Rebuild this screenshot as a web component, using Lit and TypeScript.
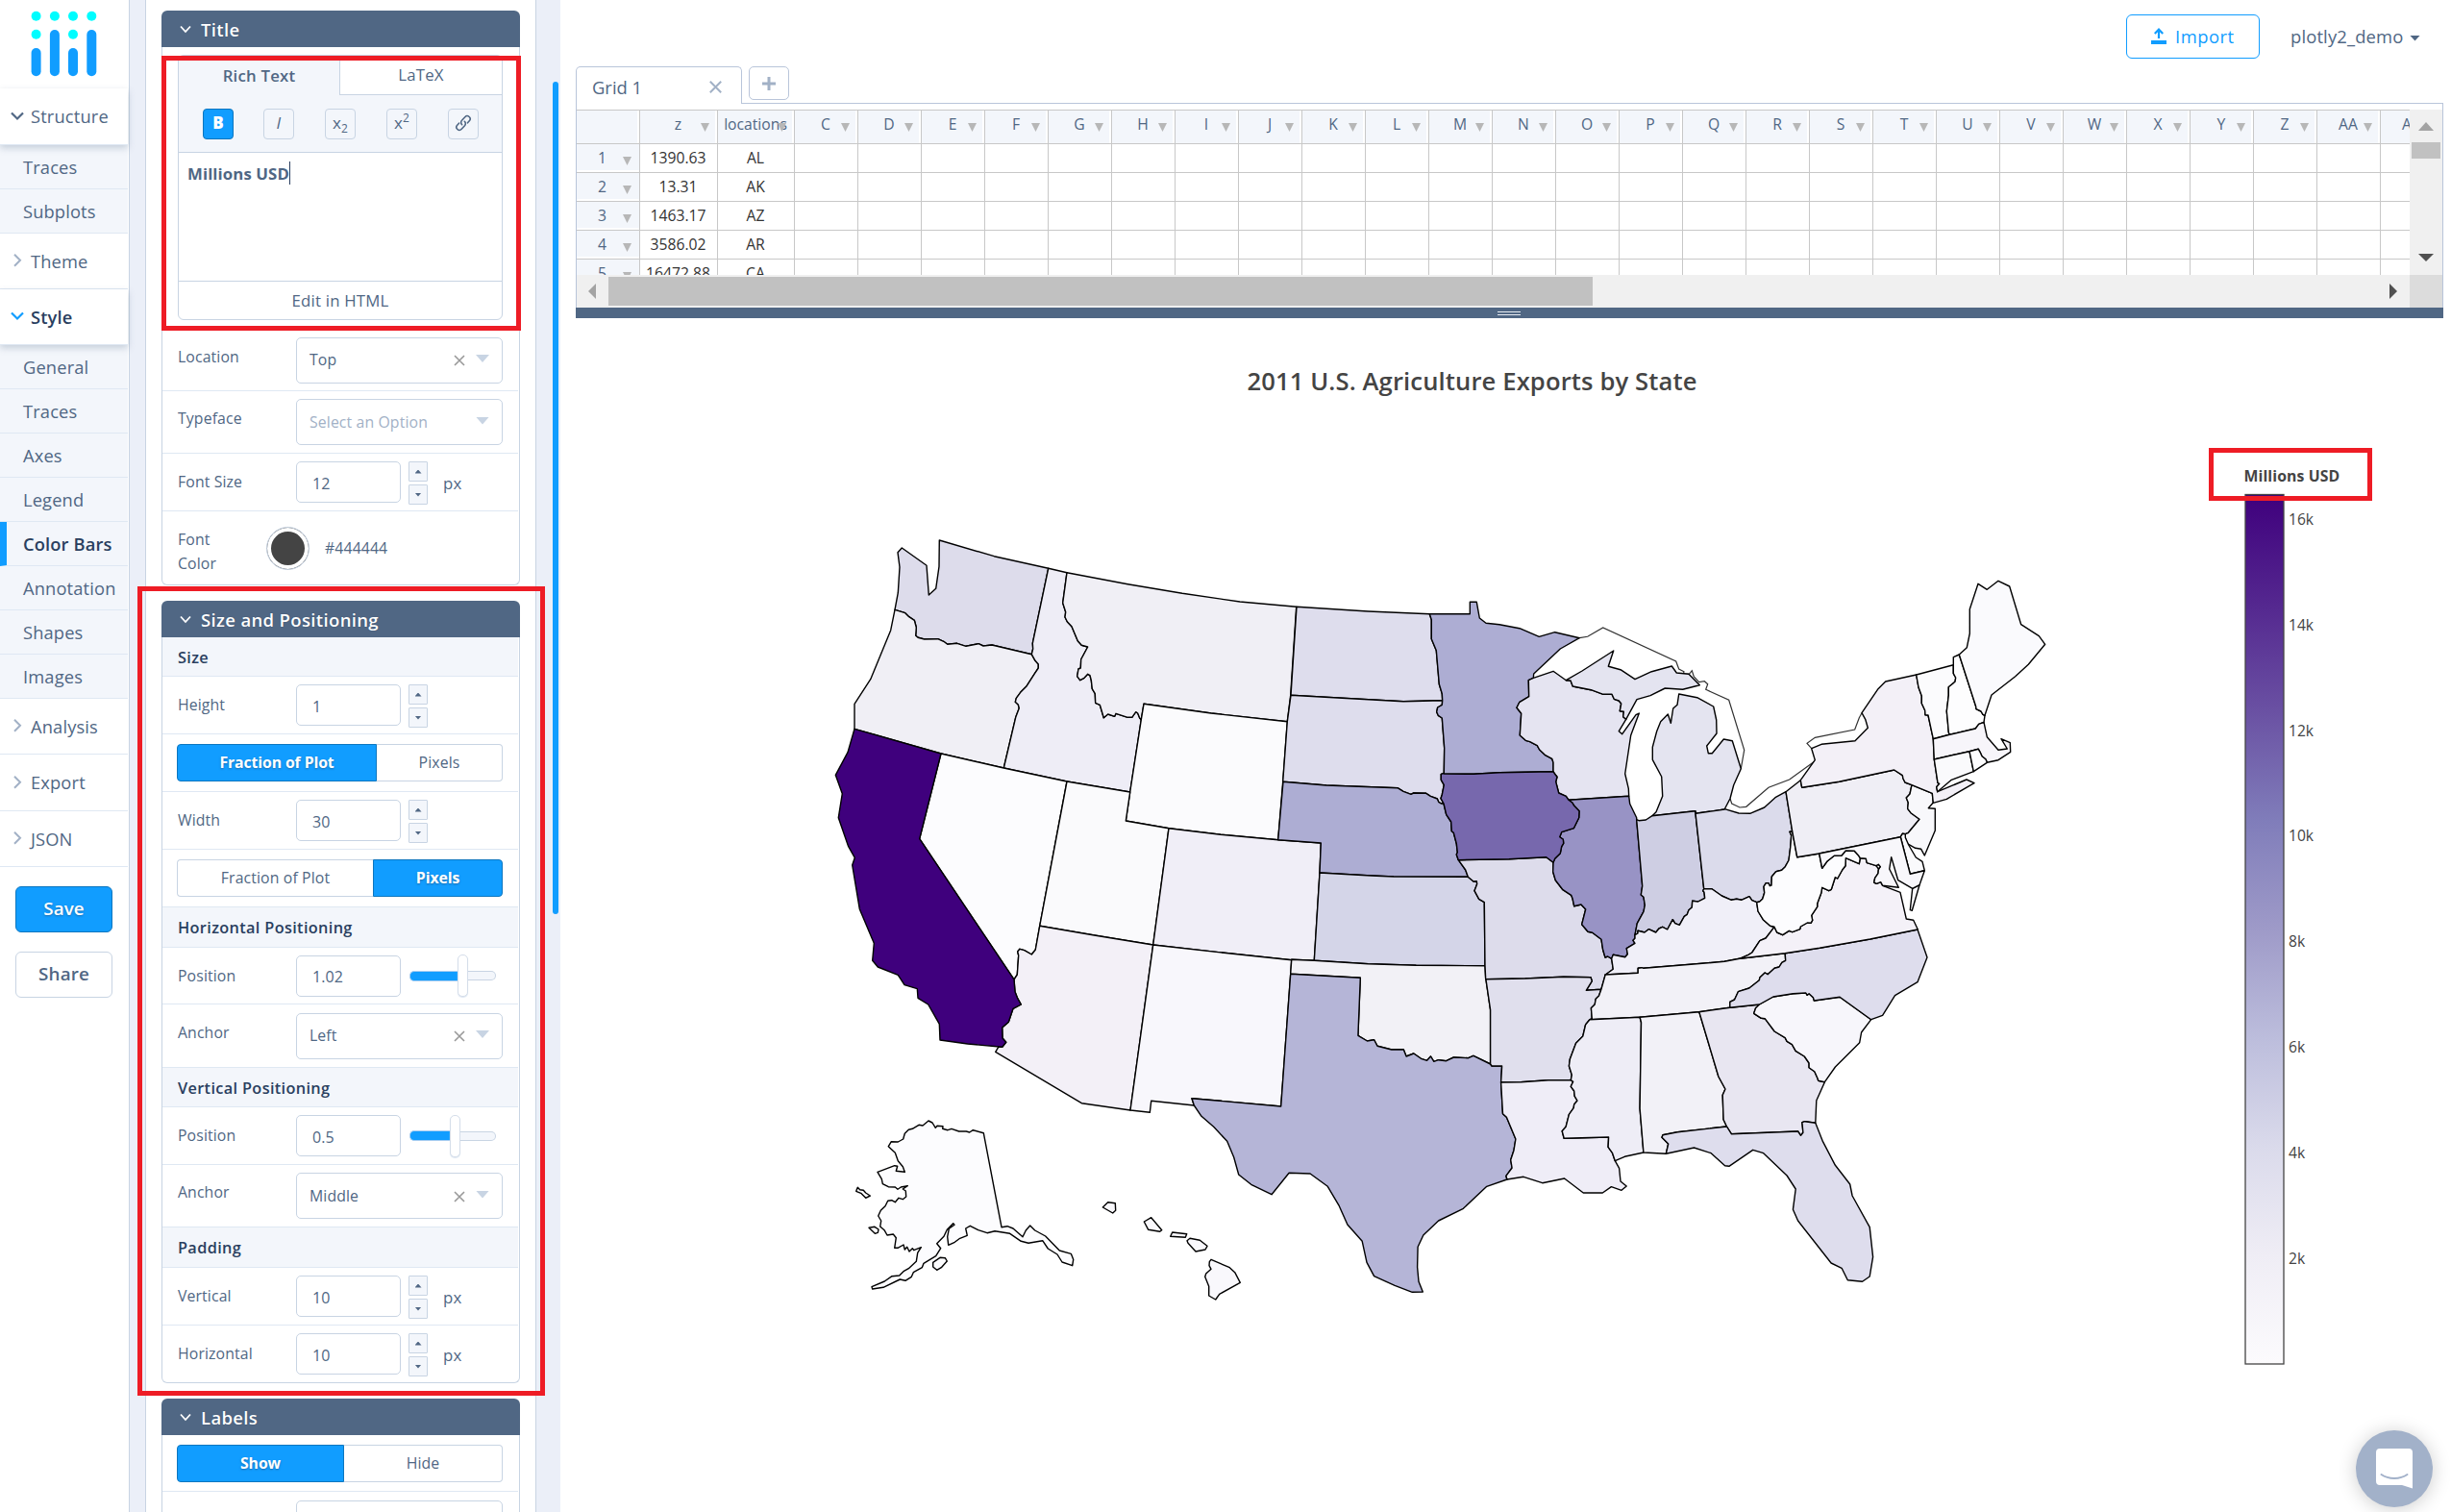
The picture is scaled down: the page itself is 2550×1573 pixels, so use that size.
import { LitElement, html, svg, css } from "lit";
import { customElement } from "lit/decorators.js";
import { classMap } from "lit/directives/class-map.js";

/* ---------- map geometry ---------- */

// Survey sheets: origin x, origin y, units per pixel in x and y.
const SHEETS: Record<string, [number, number, number, number]> = {
  A: [860, 540, 3, 3],
  B: [1300, 600, 3, 3],
  C: [1700, 580, 3, 3],
  D: [860, 920, 3, 3],
  E: [1300, 960, 2.0907, 3],
};

// Shared border arcs. A sheet letter switches the sheet for the points after it.
const ARCS: Record<string, string> = {
  waCoast: "A 213,283 223,230 228,150 222,104 235,90 312,145 319,237 341,217 351,148 352,66",
  waN: "A 352,66 523,116 692,154",
  waId: "A 692,154 643,388 644,405 640,422",
  waOr: "A 640,422 516,393 489,396 474,389 435,397 407,388 377,391 365,382 347,374 305,375 285,370 278,364 280,338 274,316 257,305 245,293 213,283",
  orCoast: "A 213,283 200,347 137,500 87,577 87,655",
  orCa: "A 87,655 357,732",
  orNv: "A 357,732 553,777",
  orId: "A 640,422 651,442 661,453 661,465 650,481 623,523 605,541 592,559 589,571 598,579 601,590 590,619 553,777",
  idN: "A 692,154 750,167",
  idMt: "A 750,167 737,262 746,290 744,306 751,320 765,335 784,380 796,394 815,399 794,438 793,465 786,468 782,491 791,503 804,496 815,484 822,488 826,503 829,530 838,545 839,574 853,580 865,620 878,609 899,616 903,607 940,619 953,619 965,602 971,606 977,621 982,626",
  mtWy: "A 982,626 990,577 1200,606 1438,632",
  idWy: "A 982,626 947,852",
  idNv: "A 553,777 750,819",
  idUt: "A 750,819 947,852",
  utWy: "A 947,852 934,942 1068,965",
  wyCo: "A 1068,965 1230,985 1409,1001",
  wySd: "A 1438,632 1424,820",
  wyNe: "A 1424,820 1409,1001",
  mtN: "A 750,167 940,203 1110,232 1290,258 1466,274",
  mtNd: "A 1466,274 1448,550",
  mtSd: "A 1448,550 1438,632",
  caNv: "A 357,732 290,998 D 585,297",
  caAz: "D 585,297 588,335 596,356 607,375 582,388 568,430 548,447 549,480 560,493 548,508",
  caCoast: "D 548,508 440,498 354,486 352,436 317,375 285,355 283,326 243,314 223,283 160,258 143,238 148,184 103,77 A 80,1080 88,1057 68,1022 37,932 49,857 28,799 66,728 87,655",
  nvUt: "A 750,819 D 665,130",
  nvAz: "D 665,130 652,204 640,219 617,206 603,202 596,210 599,222 595,282 585,297",
  utAz: "D 665,130 840,160 1019,189",
  utCo: "A 1068,965 D 1019,189",
  azNm: "D 1019,189 948,705",
  azS: "D 948,705 796,683 527,523 536,508 548,508",
  nmCo: "D 1019,189 1240,214 1451,236",
  nmOk: "D 1451,236 1448,280",
  nmTx: "D 1448,280 1418,693 1140,668 1147,690",
  nmS: "D 1147,690 1013,676 1009,712 948,705",
  coNe: "B 89,821 223,831 219,924",
  coKs: "B 219,924 202,1198",
  coOk: "B 202,1198 131,1195",
  ndN: "B 147,94 370,108 562,116",
  ndMn: "B 562,116 568,134 568,194 583,230 592,335 601,365 602,386",
  ndSd: "B 129,370 330,381 480,389 602,386",
  sdMn: "B 602,386 601,400 587,408 584,422 589,433 601,441 608,535 607,613",
  sdIa: "B 607,613 598,616 598,634 607,650 601,680 597,692 606,708",
  sdNe: "B 105,640 240,651 462,659 480,670 504,679 512,675 551,676 565,685 586,693 590,703 598,708 606,708",
  neIa: "B 606,708 614,742 629,765 631,794 637,799 646,833 649,860 646,867 652,884",
  neMo: "B 652,884 674,915 682,937",
  neKs: "B 219,924 380,933 450,936 682,937",
  ksMo: "B 682,937 699,951 709,950 710,959 702,980 716,1006 733,1016 735,1214",
  ksOk: "B 202,1198 370,1208 520,1213 735,1214",
  moOk: "B 735,1214 737,1256",
  moAr: "B 737,1256 860,1254 980,1249 1065,1250 1069,1262 1051,1291 1098,1288",
  arTn: "E 765,208 760,228 753,238 751,255 743,266 745,300 740,302",
  arMs: "E 740,302 731,318 725,354 710,376 697,425 695,447 701,475 699,491",
  arLa: "E 699,491 650,491 590,497 547,498",
  arTx: "E 547,498 549,447 527,447 524,441",
  arOk: "E 514,176 524,272 524,441",
  okTx: "E 90,160 241,172 236,352 256,369 271,365 278,385 309,396 335,395 341,417 357,408 373,424 386,430 394,417 401,433 411,428 428,431 444,420 476,422 487,415 524,441",
  txLa: "E 547,498 551,596 559,607 579,675 575,710 568,740 571,765 558,790 560,801",
  txCoast: "E 560,801 516,823 465,892 411,930 378,975 366,1012 365,1075 368,1120 377,1152 354,1153 316,1132 271,1103 255,1060 245,994 213,942 195,884 170,823 132,783 86,781 D 1389,968 1325,937 1286,906 1271,852 1250,802 1208,757 1170,724 1147,690",
  laMs: "E 699,491 704,496 699,511 706,525 707,541 713,555 706,567 705,578 695,598 688,637 680,650 684,673 781,669 780,700 789,718 795,743",
  laCoast: "E 795,743 804,766 807,807 820,822 809,835 787,824 768,843 726,843 685,798 637,812 596,793 560,801",
  msCoast: "E 795,743 816,730 857,717",
  msAl: "E 849,295 852,311 849,580 857,717",
  msTn: "E 740,302 849,295",
  alCoast: "E 857,717 906,721",
  alFl: "E 906,721 911,690 897,670 899,662 931,653 1038,636",
  alGa: "E 978,278 1020,480 1035,519 1029,538 1031,614 1038,636",
  alTn: "E 849,295 978,278",
  gaFl: "E 1038,636 1048,659 1193,651 1199,664 1204,655 1202,623 1208,620 1231,625",
  gaTn: "E 978,278 1045,265",
  gaNc: "E 1045,265 1109,255",
  gaSc: "E 1109,255 1101,266 1097,283 1113,298 1121,299 1142,339 1165,359 1169,370 1180,380 1188,400 1207,417 1217,438 1217,452 1229,464 1236,487 1237,493 1251,497",
  gaCoast: "E 1251,497 1233,555 1231,625",
  flCoast: "E 1231,625 1247,683 1274,757 1306,816 1311,852 1349,950 1356,1043 1349,1104 1333,1120 1301,1115 1288,1078 1265,1062 1193,930 1182,895 1188,831 1169,789 1118,719 1095,709 1043,760 1034,758 1004,719 967,702 906,721",
  scNc: "E 1109,255 1139,231 1182,221 1210,219 1213,226 1217,221 1226,233 1228,243 1284,232 1352,302",
  scCoast: "E 1352,302 1331,342 1327,374 1274,450 1251,497",
  ncCoast: "E 1352,302 1377,289 1404,227 1453,185 1474,108 1453,21",
  ncVa: "E 1453,21 1350,51 1240,79 1165,95",
  ncTn: "E 1165,95 1166,118 1158,124 1152,138 1142,142 1127,161 1121,156 1110,171 1109,179 1087,204 1063,215 1055,240 1045,247 1045,265",
  tnVa: "E 1165,95 1120,103 1066,112",
  tnKy: "E 1066,112 1033,121 960,130 857,142 853,140 845,142 845,157 774,162",
  tnMo: "E 774,162 765,208",
  kyMo: "B 1110,1243 1135,1225 1130,1192",
  kyIl: "B 1130,1192 1135,1180 1172,1187 1180,1178 1177,1160 1203,1144 1197,1135 1203,1129 1203,1118",
  ilIn: "B 1208,758 1226,965 1222,993 1230,1000 1234,1025 1230,1045 1210,1082 1203,1118",
  inKy: "B 1203,1118 1212,1113 1212,1105 1233,1110 1246,1100 1268,1110 1278,1098 1289,1093 1304,1101 1321,1070 1328,1082 1342,1087 1357,1060 1366,1054 1371,1040 1381,1032 1382,1012 1400,1014 1421,1003 1419,985 1415,980 1418,974",
  inOh: "B 1391,731 1418,974",
  kyOh: "C 218,1034 243,1034 274,1056 304,1069 320,1066 335,1069 360,1058 368,1070 383,1076",
  kyWv: "C 383,1076 387,1104 403,1130 425,1150 438,1153",
  kyVa: "C 438,1153 E 1123,48 1110,56 1093,93 1085,100 1066,112",
  moIl: "B 948,892 947,921 955,947 978,977 1004,994 1008,1004 1013,1028 1035,1023 1049,1038 1037,1085 1056,1108 1070,1111 1098,1132 1103,1165 1110,1188 1118,1185 1130,1192",
  iaMo: "B 652,884 810,881 926,875 948,892",
  iaIl: "B 996,697 1008,706 1012,713 1029,731 1028,752 1012,785 974,797 968,812 979,820 980,832 974,842 970,863 953,880 948,892",
  iaMn: "B 607,615 700,616 780,611 948,608",
  iaWi: "B 948,608 953,616 960,625 956,640 965,675 988,685 996,697",
  mnWi: "B 886,316 871,323 872,374 842,392 834,409 848,427 844,495 862,511 875,515 898,527 905,540 922,556 944,568 948,580 948,608",
  mnN: "B 562,116 688,116 688,79 709,79 718,129 738,145 780,149 843,161 904,187 953,173 1030,191 970,225 887,303 886,316",
  wiN: "B 886,316 948,295 988,323 1002,324",
  wiMi: "B 1002,324 1009,342 1066,353 1104,367 1131,367 1138,382 1153,387 1160,396 1156,419 1168,421 1166,437 1175,445",
  wiE: "B 1175,445 1153,482 1163,491 1206,431 1216,426 1190,495 1172,615 1183,661 1184,685",
  wiIl: "B 996,697 1184,685",
  ilLake: "B 1184,685 1187,709 1208,752 1208,758",
  upMi: "B 1002,324 988,323 1038,294 1136,231 1120,280 1158,290 1203,320 1255,296 1318,279 1333,300 1371,304 1405,338 1352,352 1297,348 1251,371 1209,383 1175,445",
  inLake: "B 1208,758 1215,761 1237,759 1257,746",
  inMi: "B 1257,746 1391,731",
  miOh: "B 1391,731 1393,739 1483,726",
  miCoast: "B 1257,746 1269,734 1289,685 1286,624 1258,571 1258,532 1271,482 1283,452 1306,429 1315,457 1322,411 1335,400 1340,366 1397,377 C 248,465 257,507 258,549 227,588 232,611 244,611 280,567 307,572 334,659 311,710 300,752 283,785",
  ohLake: "C 283,785 327,798 362,799 407,780 441,749 474,731",
  ohPa: "C 474,731 494,855",
  ohWv: "C 494,855 486,856 491,868 488,905 483,945 472,965 461,976 443,980 430,996 429,1023 424,1025 420,1016 412,1016 405,1027 407,1046 401,1066 392,1074 383,1076",
  paLake: "C 474,731 520,695",
  paNy: "C 520,695 524,718 640,700 812,663 838,680 840,690 846,702 867,710",
  paNj: "C 867,710 861,738 850,750 856,765 854,784 864,797 891,817 855,860 847,863",
  paDe: "C 847,863 838,862 832,872",
  paMd: "C 832,872 578,924",
  paWv: "C 578,924 509,935 494,855",
  nyNj: "C 867,710 931,736",
  njCoast: "C 931,736 934,765 919,782 940,784 940,852 907,930 896,910 878,907 853,893 846,874 847,863",
  deCoast: "C 847,863 847,874 857,897 880,936 900,949 907,977",
  deMd: "C 907,977 862,988 832,872",
  mdE: "C 907,977 891,1022 869,1033 824,1007 803,935 797,972 826,1030 776,1024",
  mdVa: "C 776,1024 770,1013 757,1018 749,1014 752,1000 762,986 763,975 768,965 756,962 727,953 724,940 706,938",
  mdWv: "C 578,924 587,970 603,948 625,931 648,930 661,915 688,916 700,929 706,938",
  wvVa: "C 706,938 703,956 661,938 660,962 650,975 635,1002 628,998 616,1036 608,1040 587,1030 584,1048 572,1080 572,1090 554,1117 557,1132 552,1141 541,1140 520,1152 518,1160 494,1169 484,1165 464,1178 446,1170 438,1153",
  vaCoast: "C 776,1024 831,1045 850,1128 872,1132 886,1161",
  vaShore: "C 869,1033 891,1022 868,1102 862,1100 869,1033",
  dc: "C 756,962 763,958 769,965 763,972 756,962",
  nyCoast: "C 520,695 565,632 554,596 585,583 690,572 730,532 722,505 711,485 762,410 785,387 881,366",
  nyVt: "C 881,366 888,405 898,432 898,455 908,477 909,491 918,492 934,566",
  nyMa: "C 934,566 937,630",
  nyCt: "C 937,630 948,703 953,706 944,716 947,731",
  longIsl: "C 947,731 1038,693 1062,704 976,754 934,766 931,736",
  vtN: "C 881,366 997,335",
  vtNh: "C 997,335 997,362 1004,375 1002,388 982,404 982,430 976,480 979,510 982,545 985,553",
  vtMa: "C 934,566 985,553",
  nhMa: "C 985,553 1066,534 1076,520 1092,514",
  nhCoast: "C 1092,514 1095,493",
  nhMe: "C 1095,493 1089,490 1083,480 1068,473 1067,465 1015,303",
  nhN: "C 1015,303 997,311 997,335",
  meCoast: "C 1015,303 1039,281 1048,237 1048,161 1074,82 1102,100 1137,73 1172,90 1208,209 1264,245 1283,271 1231,334 1190,371 1116,429 1095,493",
  maCoast: "C 1092,514 1102,560 1137,601 1165,597 1146,566 1174,578 1175,607 1137,632 1102,640",
  maRi: "C 1102,640 1098,630 1086,620 1080,607 1075,598 1047,605",
  maCt: "C 1047,605 937,630",
  ctRi: "C 1047,605 1060,668",
  riCoast: "C 1060,668 1102,640",
  ctCoast: "C 1060,668 991,694 947,731",
  ak: "D 318,738 330,744 340,760 345,754 363,755 362,763 378,767 390,763 413,771 436,771 446,774 457,767 490,776 546,1070 564,1067 582,1074 612,1100 622,1080 635,1065 650,1080 683,1098 727,1143 763,1153 770,1171 767,1190 735,1179 720,1155 691,1137 674,1112 630,1120 607,1114 572,1090 525,1082 501,1088 473,1079 448,1066 434,1074 439,1096 416,1105 400,1117 380,1126 377,1100 382,1075 399,1063 395,1058 376,1078 366,1099 344,1121 356,1136 341,1160 303,1183 298,1196 271,1211 265,1225 246,1237 229,1233 177,1258 143,1263 141,1256 181,1239 204,1223 227,1221 240,1208 256,1199 280,1177 284,1150 295,1133 272,1142 268,1136 258,1146 251,1132 244,1140 240,1125 222,1135 212,1135 217,1103 208,1092 189,1095 180,1079 167,1068 170,1050 161,1035 169,1018 183,1004 191,988 203,986 214,992 225,979 238,983 248,975 247,957 238,951 253,941 232,945 222,952 214,945 193,944 175,935 172,920 159,898 212,878 221,880 217,895 244,898 238,881 223,863 214,838 193,818 202,803 223,804 239,795 244,778 256,766 268,763 288,751 300,753",
  ak2: "D 97,946 104,953 115,955 122,963 136,972 122,979 107,964 92,958",
  ak3: "D 132,1072 150,1069 162,1077 160,1087 151,1090",
  ak4: "D 332,1180 354,1165 370,1166 376,1176 358,1196 344,1204 332,1194",
  hi1: "D 862,1008 878,992 901,995 902,1018 893,1026",
  hi2: "D 991,1053 1013,1040 1046,1079 1040,1084 1004,1078",
  hi3: "D 1079,1086 1124,1091 1120,1102 1073,1099",
  hi4: "D 1125,1112 1134,1105 1165,1111 1188,1129 1182,1140 1152,1146 1128,1120",
  hi5: "D 1200,1171 1258,1196 1274,1211 1291,1243 1226,1279 1214,1296 1193,1284 1193,1255 1181,1225 1184,1215 1200,1201 1194,1190 1195,1178",
  lake1: "B 1030,191 1055,187 1103,159 1331,264 1340,288 1356,296 1354,303 1372,304 1381,293 1387,312 1403,329 1420,326 1430,335 1424,352 1496,385 C 344,601 334,659",
  lake2: "C 300,752 305,768 330,780 350,778 420,718 485,693 565,635",
  lake3: "C 554,596 540,580 565,562 689,537 703,500 711,485",
};

// State rings: fill, then arcs in order ("-" walks the arc backwards).
const STATES: [string, string, string][] = [
  ["WA", "#dddceb", "waCoast waN waId waOr"],
  ["OR", "#f0eff5", "orCoast orCa orNv -orId waOr"],
  ["ID", "#eeedf6", "idN idMt idWy -idUt -idNv -orId -waId"],
  ["MT", "#f0eff5", "mtN mtNd mtSd -mtWy -idMt"],
  ["WY", "#fbfbfd", "mtWy wySd wyNe -wyCo -utWy -idWy"],
  ["NV", "#fcfcfe", "orNv idNv nvUt nvAz -caNv"],
  ["UT", "#fafafc", "idUt utWy utCo -utAz -nvUt"],
  ["CO", "#f0eef7", "wyCo coNe coKs coOk -nmCo -utCo"],
  ["AZ", "#f3f0f7", "utAz azNm azS -caAz -nvAz"],
  ["NM", "#f8f7fc", "nmCo nmOk nmTx nmS -azNm"],
  ["ND", "#dedded", "ndN ndMn -ndSd"],
  ["SD", "#dedded", "ndSd sdMn sdIa -sdNe -wySd"],
  ["NE", "#adadd3", "sdNe neIa neMo -neKs -coNe"],
  ["KS", "#d4d5e8", "neKs ksMo -ksOk -coKs"],
  ["OK", "#f2f1f6", "-coOk ksOk moOk arOk -okTx -nmOk"],
  ["TX", "#b5b5d7", "okTx -arTx txLa txCoast -nmTx"],
  ["MN", "#adadd3", "mnN mnWi -iaMn -sdMn -ndMn"],
  ["MO", "#dddceb", "iaMo moIl -kyMo tnMo -moAr -moOk -ksMo -neMo"],
  ["AR", "#e0dfed", "moAr arTn arMs arLa arTx -arOk"],
  ["LA", "#efedf7", "-arLa laMs laCoast -txLa"],
  ["WI", "#e5e4f1", "wiN wiMi wiE -wiIl -iaWi -mnWi"],
  ["IL", "#9893c5", "wiIl ilLake ilIn -kyIl -moIl -iaIl"],
  ["IA", "#7768ad", "iaMn iaWi iaIl -iaMo -neIa -sdIa"],
  ["MI-U", "#e4e4f0", "upMi -wiMi"],
  ["MI-L", "#e4e4f0", "miCoast -miOh -inMi"],
  ["IN", "#cecee3", "inLake inMi inOh -inKy -ilIn"],
  ["OH", "#dbdbeb", "miOh ohLake ohPa ohWv -kyOh -inOh"],
  ["KY", "#f0eff8", "kyOh kyWv kyVa tnKy kyMo kyIl inKy"],
  ["TN", "#f2f1f7", "-tnKy -tnVa ncTn -gaTn -alTn -msTn -arTn -tnMo"],
  ["MS", "#eeedf6", "msTn msAl -msCoast -laMs -arMs"],
  ["AL", "#f2f1f7", "alTn alGa -alFl -alCoast -msAl"],
  ["GA", "#e8e6f1", "gaTn gaNc gaSc gaCoast -gaFl -alGa"],
  ["FL", "#dedded", "gaFl flCoast alFl"],
  ["SC", "#f7f6fb", "scNc scCoast -gaSc"],
  ["NC", "#dedded", "-ncVa -ncCoast -scNc -gaNc -ncTn"],
  ["VA", "#f4f1f8", "-mdVa vaCoast ncVa tnVa -kyVa -wvVa"],
  ["VA-E", "#f8f7fb", "vaShore"],
  ["WV", "#fcfcfe", "mdWv wvVa -kyWv -ohWv -paWv"],
  ["PA", "#efeef5", "paLake paNy paNj paDe paMd paWv -ohPa"],
  ["NJ", "#f8f8fb", "nyNj njCoast -paNj"],
  ["DE", "#fafafc", "-paDe deCoast deMd"],
  ["MD", "#f8f7fb", "-paMd -deMd mdE mdVa -mdWv"],
  ["DC", "#ffffff", "dc"],
  ["NY", "#f3f0f7", "nyCoast nyVt nyMa nyCt longIsl -nyNj -paNy"],
  ["VT", "#fbfbfd", "vtN vtNh -vtMa -nyVt"],
  ["NH", "#fdfdfe", "-nhN -nhMe -nhCoast -nhMa -vtNh"],
  ["ME", "#fafafd", "meCoast nhMe"],
  ["MA", "#f7f5fa", "vtMa nhMa maCoast maRi maCt -nyMa"],
  ["CT", "#fafafc", "-maCt ctRi ctCoast -nyCt"],
  ["RI", "#fdfdfe", "-maRi -riCoast -ctRi"],
  ["CA", "#3f007d", "orCa caNv caAz caCoast"],
  ["AK", "#fcfcfe", "ak"],
  ["AK-2", "#fcfcfe", "ak2"],
  ["AK-3", "#fcfcfe", "ak3"],
  ["AK-4", "#fcfcfe", "ak4"],
  ["HI-1", "#f9f8fc", "hi1"],
  ["HI-2", "#f9f8fc", "hi2"],
  ["HI-3", "#f9f8fc", "hi3"],
  ["HI-4", "#f9f8fc", "hi4"],
  ["HI-5", "#f9f8fc", "hi5"],
];

function arcPoints(name: string): string[] {
  let sheet = SHEETS.A;
  const out: string[] = [];
  for (const token of ARCS[name].split(" ")) {
    if (SHEETS[token]) {
      sheet = SHEETS[token];
      continue;
    }
    const [x, y] = token.split(",").map(Number);
    out.push(`${(sheet[0] + x / sheet[2]).toFixed(1)},${(sheet[1] + y / sheet[3]).toFixed(1)}`);
  }
  return out;
}

function ring(arcs: string): string {
  return arcs
    .split(" ")
    .map((a) => (a[0] === "-" ? arcPoints(a.slice(1)).reverse() : arcPoints(a)).join(" "))
    .join(" ");
}

const PURPLES = ["#3f007d", "#54278f", "#6a51a3", "#807dba", "#9e9ac8", "#bcbddc", "#dadaeb", "#efedf5", "#fcfbfd"];

@customElement("choropleth-plot")
class ChoroplethPlot extends LitElement {
  static styles = css`
    :host { display: block; width: 1967px; height: 1242px; }
    svg { display: block; }
    text { font-family: "Open Sans", sans-serif; fill: #444; }
    .title { font-size: 25.6px; font-weight: 600; letter-spacing: 0.12px; }
    .legend { font-size: 15.8px; font-weight: 700; letter-spacing: 0.1px; }
    .tick { font-size: 15.6px; }
    .state { stroke: #000; stroke-width: 1.4; stroke-linejoin: round; }
    .coast { fill: none; stroke: #333; stroke-width: 1.2; }
  `;
  render() {
    return html`<svg width="1967" height="1242" viewBox="583 331 1967 1242">
      <defs>
        <linearGradient id="scale" x1="0" y1="0" x2="0" y2="1">
          ${PURPLES.map((c, i) => svg`<stop offset=${i / 8} stop-color=${c}></stop>`)}
        </linearGradient>
      </defs>
      <text class="title" x="1531.500" y="405.500" text-anchor="middle">2011 U.S. Agriculture Exports by State</text>
      ${["lake1", "lake2", "lake3"].map((l) => svg`<polyline class="coast" points=${arcPoints(l).join(" ")}></polyline>`)}
      ${STATES.map(([, fill, arcs]) => svg`<polygon class="state" fill=${fill} points=${ring(arcs)}></polygon>`)}
      <rect x="2336" y="514.5" width="40" height="904.5" fill="url(#scale)" stroke="#444" stroke-width="1.3"></rect>
      <text class="legend" x="2334.500" y="500.500">Millions USD</text>
      ${[16, 14, 12, 10, 8, 6, 4, 2].map(
        (v, i) => svg`<text class="tick" x="2381" y=${545.8 + i * 109.85}>${v}k</text>`
      )}
    </svg>`;
  }
}

/* ---------- spreadsheet ---------- */

const COLS: [string, number][] = [
  ["", 66], ["z", 81], ["locations", 80],
  ..."CDEFGHIJKLMNOPQRSTUVWXYZ".split("").map((c): [string, number] => [c, 66]),
  ["AA", 66], ["AB", 66],
];
const DATA: [string, string][] = [
  ["1390.63", "AL"], ["13.31", "AK"], ["1463.17", "AZ"], ["3586.02", "AR"], ["16472.88", "CA"],
];

@customElement("data-grid")
class DataGrid extends LitElement {
  static styles = css`
    :host { display: block; font-family: "Open Sans", sans-serif; font-size: 15.7px; color: #333; }
    .tabs { display: flex; height: 39px; box-sizing: border-box; }
    .tab { box-sizing: border-box; width: 173px; height: 39px; border: 1px solid #b9c5da; border-bottom: 0; border-radius: 5px 5px 0 0; display: flex; align-items: center; justify-content: space-between; padding: 2px 20px 0 16px; font-size: 18.4px; color: #506784; }
    .rest { flex: 1; border-bottom: 1px solid #b9c5da; padding-left: 7px; }
    .plus { box-sizing: border-box; width: 42px; height: 35px; border: 1px solid #b9c5da; border-radius: 5px; display: flex; align-items: center; justify-content: center; }
    .frame { box-sizing: border-box; height: 212px; padding-top: 6px; border: solid #b9c5da; border-width: 0 1px; display: grid; grid-template-columns: 1907px 34px; grid-template-rows: 172px 34px; }
    .cells { overflow: hidden; border-top: 1px solid #c8c8c8; box-sizing: border-box; }
    .row { display: flex; width: 2100px; }
    .cell { box-sizing: border-box; height: 30px; border: solid #c8c8c8; border-width: 0 1px 1px 0; padding: 0 1px 1.5px 0; flex: none; display: flex; align-items: center; justify-content: center; }
    .head .cell { height: 35px; padding-bottom: 6px; }
    .hd { background: #f3f6fb; color: #506784; box-shadow: inset -2px 0 #fff; position: relative; }
    .row .num { padding-right: 12px; box-shadow: inset 0 -2px #fff; }
    .tri { position: absolute; right: 8px; bottom: 7px; width: 9px; height: 9px; background: #b7b7b7; clip-path: polygon(0 0, 100% 0, 50% 100%); }
    .head .tri { bottom: 12px; }
    .vbar { background: #f0f0f0; display: flex; flex-direction: column; align-items: center; padding: 13px 0 14px; box-sizing: border-box; }
    .vthumb { width: 30px; height: 17px; background: #c1c1c1; margin-top: 12px; }
    .up { width: 16px; height: 9px; background: #a3a3a3; clip-path: polygon(50% 0, 100% 100%, 0 100%); }
    .down { width: 16px; height: 8px; background: #505050; clip-path: polygon(0 0, 100% 0, 50% 100%); margin-top: auto; }
    .hbar { background: #f0f0f0; display: flex; align-items: center; padding: 0 13px 0 12px; }
    .left { width: 8px; height: 16px; background: #a3a3a3; clip-path: polygon(100% 0, 100% 100%, 0 50%); }
    .hthumb { width: 1024px; height: 30px; background: #c1c1c1; margin-left: 13px; }
    .right { width: 8px; height: 16px; background: #505050; clip-path: polygon(0 0, 100% 50%, 0 100%); margin-left: auto; }
    .corner { background: #dcdcdc; }
    .split { height: 11px; background: #506784; display: flex; flex-direction: column; align-items: center; justify-content: center; gap: 2px; }
    .grip { width: 24px; height: 1px; background: #e6ebf2; margin-right: 2px; }
  `;
  render() {
    return html`
      <div class="tabs">
        <div class="tab"><span>Grid 1</span>
          <svg width="13" height="13" viewBox="0 0 13 13"><path d="M.8.8l11.4 11.4M12.2.8L.8 12.2" stroke="#a2b1c6" stroke-width="2"></path></svg>
        </div>
        <div class="rest"><div class="plus">
          <svg width="14" height="14" viewBox="0 0 14 14"><path d="M7 0v14M0 7h14" stroke="#a2b1c6" stroke-width="3"></path></svg>
        </div></div>
      </div>
      <div class="frame">
        <div class="cells">
          <div class="row head">
            ${COLS.map(([c, w]) => html`<div class="cell hd" style="width:${w}px">${c}${c ? html`<i class="tri"></i>` : ""}</div>`)}
          </div>
          ${DATA.map((d, r) => html`<div class="row">
            ${COLS.map(([, w], i) => i === 0
              ? html`<div class="cell hd num" style="width:${w}px">${r + 1}<i class="tri"></i></div>`
              : html`<div class="cell" style="width:${w}px">${d[i - 1] ?? ""}</div>`)}
          </div>`)}
        </div>
        <div class="vbar"><i class="up"></i><i class="vthumb"></i><i class="down"></i></div>
        <div class="hbar"><i class="left"></i><i class="hthumb"></i><i class="right"></i></div>
        <div class="corner"></div>
      </div>
      <div class="split"><i class="grip"></i><i class="grip"></i></div>`;
  }
}

/* ---------- side navigation ---------- */

type Nav = { label: string; kind: "top" | "sub"; open?: boolean; active?: boolean; h: number };
const NAV: Nav[] = [
  { label: "Structure", kind: "top", open: true, h: 59 },
  { label: "Traces", kind: "sub", h: 46 },
  { label: "Subplots", kind: "sub", h: 46 },
  { label: "Theme", kind: "top", h: 58 },
  { label: "Style", kind: "top", open: true, active: true, h: 58 },
  { label: "General", kind: "sub", h: 46 },
  { label: "Traces", kind: "sub", h: 46 },
  { label: "Axes", kind: "sub", h: 46 },
  { label: "Legend", kind: "sub", h: 46 },
  { label: "Color Bars", kind: "sub", active: true, h: 46 },
  { label: "Annotation", kind: "sub", h: 46 },
  { label: "Shapes", kind: "sub", h: 46 },
  { label: "Images", kind: "sub", h: 46 },
  { label: "Analysis", kind: "top", h: 58 },
  { label: "Export", kind: "top", h: 59 },
  { label: "JSON", kind: "top", h: 58 },
];

@customElement("side-nav")
class SideNav extends LitElement {
  static styles = css`
    :host { display: block; box-sizing: border-box; width: 135px; height: 1573px; border-right: 1px solid #c8d4e3; font-family: "Open Sans", sans-serif; font-size: 18.3px; letter-spacing: 0.15px; color: #506784; background: #fff; }
    .logo { display: block; height: 92px; width: 133px; }
    .item { box-sizing: border-box; width: 133px; display: flex; align-items: center; border-bottom: 1px solid #dfe8f3; white-space: nowrap; overflow: visible; padding-bottom: 1px; }
    .sub { background: #f3f6fb; padding-left: 24px; }
    .top { padding-left: 11px; background: #fff; }
    .first { box-shadow: 0 -1px 4px #e6ebf2; }
    .open { box-shadow: 0 3px 7px rgba(80, 103, 132, 0.28); position: relative; }
    .ico { width: 21px; height: 14px; flex: none; }
    .active { color: #2a3f5f; font-weight: 600; }
    .sub.active { border-left: 7px solid #119dff; padding-left: 17px; }
    .actions { display: flex; flex-direction: column; gap: 20px; padding: 20px 0 0 16px; }
    .btn { box-sizing: border-box; width: 101px; height: 48px; border-radius: 6px; border: 1px solid #c8d4e3; font-weight: 600; font-size: 18.8px; padding-bottom: 2px; display: flex; align-items: center; justify-content: center; }
    .save { background: #119dff; border-color: #0d76bf; color: #fff; text-shadow: 0 1px 2px rgba(42, 63, 95, 0.5); }
  `;
  chevron(n: Nav) {
    return n.open
      ? svg`<path d="M1 3.5l6 6 6-6" fill="none" stroke=${n.active ? "#119dff" : "#506784"} stroke-width="2.2"></path>`
      : svg`<path d="M4 .8l6 6-6 6" fill="none" stroke="#a2b1c6" stroke-width="2"></path>`;
  }
  render() {
    const cx = [37.6, 56.9, 76, 95.3];
    return html`
      <svg class="logo" viewBox="0 0 133 92">
        ${cx.map((x, i) => svg`
          <circle cx=${x} cy="16.7" r="5" fill="#00fdff"></circle>
          ${i % 2 === 0 ? svg`<circle cx=${x} cy="35.8" r="5" fill="#00fdff"></circle>` : ""}
          <rect x=${x - 5} y=${i % 2 ? 31 : 50} width="10" height=${i % 2 ? 48.3 : 29.3} rx="5" fill="#119dff"></rect>`)}
      </svg>
      ${NAV.map((n, i) => html`<div class=${classMap({ item: true, [n.kind]: true, open: !!n.open, active: !!n.active, first: i === 0 })} style="height:${n.h}px">
        ${n.kind === "top" ? html`<svg class="ico" viewBox="0 0 21 14">${this.chevron(n)}</svg>` : ""}<span>${n.label}</span>
      </div>`)}
      <div class="actions"><div class="btn save">Save</div><div class="btn">Share</div></div>`;
  }
}

/* ---------- settings panel ---------- */

type Row =
  | { t: "head"; h: number; label: string }
  | { t: "num"; h: number; label: string; value: string; unit?: string }
  | { t: "select"; h: number; label: string; value: string; empty?: boolean }
  | { t: "slide"; h: number; label: string; value: string; at: number }
  | { t: "radio"; h: number; opts: [string, string]; on: number; split: number }
  | { t: "color"; h: number; label: string; value: string };

const TITLE_ROWS: Row[] = [
  { t: "select", h: 64, label: "Location", value: "Top" },
  { t: "select", h: 65, label: "Typeface", value: "Select an Option", empty: true },
  { t: "num", h: 60, label: "Font Size", value: "12", unit: "px" },
  { t: "color", h: 76, label: "Font Color", value: "#444444" },
];
const SIZE_ROWS: Row[] = [
  { t: "head", h: 41, label: "Size" },
  { t: "num", h: 60, label: "Height", value: "1" },
  { t: "radio", h: 60, opts: ["Fraction of Plot", "Pixels"], on: 0, split: 208 },
  { t: "num", h: 60, label: "Width", value: "30" },
  { t: "radio", h: 60, opts: ["Fraction of Plot", "Pixels"], on: 1, split: 204 },
  { t: "head", h: 42, label: "Horizontal Positioning" },
  { t: "slide", h: 59, label: "Position", value: "1.02", at: 50 },
  { t: "select", h: 66, label: "Anchor", value: "Left" },
  { t: "head", h: 41, label: "Vertical Positioning" },
  { t: "slide", h: 60, label: "Position", value: "0.5", at: 42 },
  { t: "select", h: 65, label: "Anchor", value: "Middle" },
  { t: "head", h: 42, label: "Padding" },
  { t: "num", h: 60, label: "Vertical", value: "10", unit: "px" },
  { t: "num", h: 59, label: "Horizontal", value: "10", unit: "px" },
];
const LABEL_ROWS: Row[] = [
  { t: "radio", h: 59, opts: ["Show", "Hide"], on: 0, split: 174 },
  { t: "select", h: 66, label: "", value: "", empty: true },
];

@customElement("settings-panel")
class SettingsPanel extends LitElement {
  static styles = css`
    :host { display: flex; width: 448px; height: 1573px; overflow: hidden; background: #ebeff8; font-family: "Open Sans", sans-serif; font-size: 15.8px; letter-spacing: 0.12px; color: #506784; box-sizing: border-box; padding-left: 16px; }
    .page { box-sizing: border-box; width: 407px; height: 1573px; background: #fff; border: solid #c8d4e3; border-width: 0 1px; padding: 11px 16px 0; display: flex; flex-direction: column; gap: 16px; overflow: hidden; }
    .rail { flex: 1; padding: 85px 0 0 17px; }
    .thumb { width: 6px; height: 866px; border-radius: 3px; background: #119dff; }
    .section { flex: none; }
    .bar { height: 38px; background: #506784; border-radius: 6px 6px 0 0; color: #fff; font-weight: 600; font-size: 18.5px; letter-spacing: 0.35px; display: flex; align-items: center; padding-left: 19px; gap: 10px; text-shadow: 0 0 1px #2a3f5f; }
    .body { border: solid #c8d4e3; border-width: 0 1px 1px; border-radius: 0 0 6px 6px; padding-right: 1px; }
    .row { box-sizing: border-box; display: flex; align-items: center; border-bottom: 1px solid #dfe8f3; padding-left: 16px; }
    .row:last-child { border-bottom: 0; }
    .head { background: #f3f6fb; color: #2a3f5f; font-weight: 600; font-size: 16.3px; letter-spacing: 0.35px; padding-top: 1px; }
    .label { width: 123px; flex: none; padding-bottom: 1px; box-sizing: border-box; }
    .label.sel { padding-bottom: 8px; }
    .label.col { width: 60px; line-height: 25px; padding-top: 8px; margin-right: 32px; }
    .box { box-sizing: border-box; border: 1px solid #c8d4e3; border-radius: 5px; display: flex; align-items: center; }
    .input { width: 109px; height: 43px; padding: 2px 0 0 16px; font-size: 16px; }
    .select { width: 215px; height: 48px; padding: 0 13px 1px 13px; }
    .empty { color: #a2b1c6; }
    .arrows { margin-left: auto; display: flex; align-items: center; gap: 11px; }
    .cross { margin-top: 2px; }
    .caret { width: 14px; height: 8px; background: #c8d4e3; clip-path: polygon(0 0, 100% 0, 50% 100%); margin-top: -2px; }
    .steps { display: flex; flex-direction: column; gap: 3px; margin: 2px 0 0 8px; }
    .step { box-sizing: border-box; width: 20px; height: 21px; border: 1px solid #c8d4e3; background: #f3f6fb; border-radius: 1px; display: flex; align-items: center; justify-content: center; }
    .tip { width: 7px; height: 4px; background: #506784; clip-path: polygon(50% 0, 100% 100%, 0 100%); }
    .tip.dn { clip-path: polygon(0 0, 100% 0, 50% 100%); }
    .unit { margin-left: 16px; padding-top: 1px; font-size: 16.8px; }
    .slider { width: 90px; height: 44px; margin-left: 9px; display: flex; align-items: center; }
    .fill { box-sizing: border-box; height: 11px; background: #119dff; border: 1px solid #a9cdf0; border-right: 0; border-radius: 5px 0 0 5px; }
    .knob { box-sizing: border-box; width: 11px; height: 44px; border: 1px solid #d5deea; border-radius: 5px; background: #fff; box-shadow: 0 1px 1px #dfe8f3; flex: none; }
    .track { box-sizing: border-box; flex: 1; height: 10px; border: 1px solid #c8d4e3; border-left: 0; border-radius: 0 5px 5px 0; background: #f3f6fb; }
    .radio { padding-left: 15px; }
    .opts { display: flex; width: 339px; height: 39px; }
    .opt { box-sizing: border-box; display: flex; align-items: center; justify-content: center; padding-bottom: 1px; border: 1px solid #c8d4e3; border-radius: 4px; }
    .opt:first-child { border-radius: 4px 0 0 4px; border-right: 0; }
    .opt:last-child { flex: 1; border-radius: 0 4px 4px 0; border-left: 0; }
    .opt.on { background: #119dff; border: 1px solid #0d76bf; color: #fff; font-weight: 700; letter-spacing: -0.1px; text-shadow: 0 1px 2px rgba(42, 63, 95, 0.5); }
    .swatch { box-sizing: border-box; width: 45px; height: 45px; border-radius: 50%; border: 1px solid #c8d4e3; background: #444; box-shadow: inset 0 0 0 4px #fff; }
    .hex { margin-left: 16px; }
    .editor { height: 294px; box-sizing: border-box; padding: 8px 0 0 16px; border-bottom: 1px solid #dfe8f3; }
    .rich { box-sizing: border-box; width: 338px; height: 276px; border: 1px solid #c8d4e3; border-radius: 6px; overflow: hidden; display: flex; flex-direction: column; font-size: 16.8px; letter-spacing: 0.2px; }
    .modes { display: flex; height: 41px; flex: none; }
    .mode { box-sizing: border-box; width: 167px; display: flex; align-items: center; justify-content: center; background: #f3f6fb; font-weight: 600; padding-bottom: 1px; }
    .mode.off { flex: 1; background: #fff; font-weight: 400; border: solid #c8d4e3; border-width: 0 0 1px 1px; }
    .tools { box-sizing: border-box; height: 60px; flex: none; background: #f3f6fb; border-bottom: 1px solid #c8d4e3; display: flex; align-items: center; gap: 32px; padding: 1px 0 0 25px; }
    .tool { box-sizing: border-box; width: 32px; height: 32px; border: 1px solid #c8d4e3; border-radius: 4px; display: flex; align-items: center; justify-content: center; font-size: 17px; padding-bottom: 3px; }
    .tool.on { background: #119dff; border-color: #0d76bf; color: #fff; font-weight: 800; margin-right: -1px; }
    .slant { font-style: italic; }
    .small { font-size: 12px; }
    .lower { margin-top: 11px; }
    .upper { margin-top: -11px; }
    .area { height: 123px; flex: none; border-bottom: 1px solid #c8d4e3; font-weight: 700; letter-spacing: 0.1px; display: flex; align-items: flex-start; padding: 10px 0 0 9px; line-height: 24px; }
    .cursor { width: 1.5px; height: 24px; background: #2a3f5f; margin-top: -1px; }
    .edit { flex: 1; display: flex; align-items: center; justify-content: center; padding-bottom: 1px; }
  `;

  row(r: Row) {
    switch (r.t) {
      case "head":
        return html`<div class="row head" style="height:${r.h}px">${r.label}</div>`;
      case "radio":
        return html`<div class="row radio" style="height:${r.h}px"><div class="opts">
          ${r.opts.map((o, i) => html`<div class=${classMap({ opt: true, on: i === r.on })} style=${i === 0 ? `width:${r.split}px` : ""}>${o}</div>`)}
        </div></div>`;
      case "select":
        return html`<div class="row" style="height:${r.h}px"><span class="label sel">${r.label}</span>
          <div class=${classMap({ box: true, select: true, empty: !!r.empty })}>${r.value}
            <span class="arrows">
              ${r.empty ? "" : html`<svg class="cross" width="12" height="12" viewBox="0 0 12 12"><path d="M1 1l10 10M11 1L1 11" stroke="#999" stroke-width="1.6"></path></svg>`}
              <i class="caret"></i>
            </span>
          </div></div>`;
      case "num":
        return html`<div class="row" style="height:${r.h}px"><span class="label">${r.label}</span>
          <div class="box input">${r.value}</div>
          <div class="steps"><span class="step"><i class="tip"></i></span><span class="step"><i class="tip dn"></i></span></div>
          ${r.unit ? html`<span class="unit">${r.unit}</span>` : ""}</div>`;
      case "slide":
        return html`<div class="row" style="height:${r.h}px"><span class="label">${r.label}</span>
          <div class="box input">${r.value}</div>
          <div class="slider"><i class="fill" style="width:${r.at}px"></i><i class="knob"></i><i class="track"></i></div></div>`;
      case "color":
        return html`<div class="row" style="height:${r.h}px"><span class="label col">${r.label}</span>
          <span class="swatch"></span><span class="hex">${r.value}</span></div>`;
    }
  }

  section(title: string, rows: Row[], before: unknown = "") {
    return html`<div class="section">
      <div class="bar"><svg width="12" height="9" viewBox="0 0 12 9"><path d="M1 1.5l5 5.5 5-5.5" fill="none" stroke="#fff" stroke-width="1.8"></path></svg>${title}</div>
      <div class="body">${before}${rows.map((r) => this.row(r))}</div>
    </div>`;
  }

  editor() {
    return html`<div class="editor"><div class="rich">
      <div class="modes"><span class="mode">Rich Text</span><span class="mode off">LaTeX</span></div>
      <div class="tools">
        <span class="tool on">B</span>
        <span class="tool slant">I</span>
        <span class="tool">x<span class="small lower">2</span></span>
        <span class="tool">x<span class="small upper">2</span></span>
        <span class="tool"><svg width="18" height="18" viewBox="0 0 18 18"><g fill="none" stroke="#506784" stroke-width="1.6" stroke-linecap="round"><path d="M7.6 10.6a3 3 0 0 1-.1-4.3l3.3-3.6a3 3 0 0 1 4.5 4.1l-1.8 2"></path><path d="M10.4 7.4a3 3 0 0 1 .1 4.3l-3.3 3.6a3 3 0 0 1-4.5-4.1l1.8-2"></path></g></svg></span>
      </div>
      <div class="area">Millions USD<i class="cursor"></i></div>
      <div class="edit">Edit in HTML</div>
    </div></div>`;
  }

  render() {
    return html`
      <div class="page">
        ${this.section("Title", TITLE_ROWS, this.editor())}
        ${this.section("Size and Positioning", SIZE_ROWS)}
        ${this.section("Labels", LABEL_ROWS)}
      </div>
      <div class="rail"><div class="thumb"></div></div>`;
  }
}

/* ---------- application shell ---------- */

@customElement("app-root")
class AppRoot extends LitElement {
  static styles = css`
    :host { display: flex; position: relative; width: 2550px; height: 1573px; overflow: hidden; background: #fff; font-family: "Open Sans", sans-serif; color: #506784; }
    .main { flex: 1; min-width: 0; display: flex; flex-direction: column; }
    .top { box-sizing: border-box; height: 69px; display: flex; justify-content: flex-end; align-items: flex-start; padding: 15px 32px 0 0; }
    .import { box-sizing: border-box; width: 139px; height: 46px; border: 1.5px solid #119dff; border-radius: 6px; color: #119dff; font-size: 18.4px; letter-spacing: 0.5px; display: flex; align-items: center; padding: 0 0 1px 25px; gap: 9px; }
    .user { box-sizing: border-box; margin-left: 32px; height: 46px; width: 135px; display: flex; align-items: center; justify-content: space-between; padding-bottom: 1px; font-size: 18.4px; letter-spacing: 0.15px; }
    .caret { width: 11px; height: 6px; background: #506784; clip-path: polygon(0 0, 100% 0, 50% 100%); margin-top: 4px; }
    data-grid { margin: 0 8px 0 16px; }
    .mark { position: absolute; box-sizing: border-box; border: 5px solid #ee1c25; }
    .m1 { left: 168px; top: 58px; width: 374px; height: 286px; }
    .m2 { left: 143px; top: 610px; width: 424px; height: 842px; }
    .m3 { left: 2298px; top: 466px; width: 170px; height: 55px; }
    .chat { position: absolute; left: 2451px; top: 1488px; width: 80px; height: 80px; border-radius: 50%; background: #a2b1c9; box-shadow: 0 2px 20px rgba(0, 0, 0, 0.2); display: flex; align-items: center; justify-content: center; }
  `;
  render() {
    return html`
      <side-nav></side-nav>
      <settings-panel></settings-panel>
      <div class="main">
        <div class="top">
          <div class="import"><svg width="16" height="17" viewBox="0 0 16 17"><path d="M8 11V2M3.8 6L8 1.6 12.2 6" fill="none" stroke="#119dff" stroke-width="2.2"></path><rect y="13" width="16" height="4" fill="#119dff"></rect></svg>Import</div>
          <div class="user"><span>plotly2_demo</span><i class="caret"></i></div>
        </div>
        <data-grid></data-grid>
        <choropleth-plot></choropleth-plot>
      </div>
      <div class="mark m1"></div>
      <div class="mark m2"></div>
      <div class="mark m3"></div>
      <div class="chat"><svg width="38" height="42" viewBox="0 0 38 42"><path d="M4 0h30a4 4 0 0 1 4 4v37.5L27 38H4a4 4 0 0 1-4-4V4a4 4 0 0 1 4-4z" fill="#fff"></path><path d="M5.500 27c7.500 5.300 19.500 5.300 27 0" fill="none" stroke="#a2b1c9" stroke-width="2" stroke-linecap="round"></path></svg></div>`;
  }
}
